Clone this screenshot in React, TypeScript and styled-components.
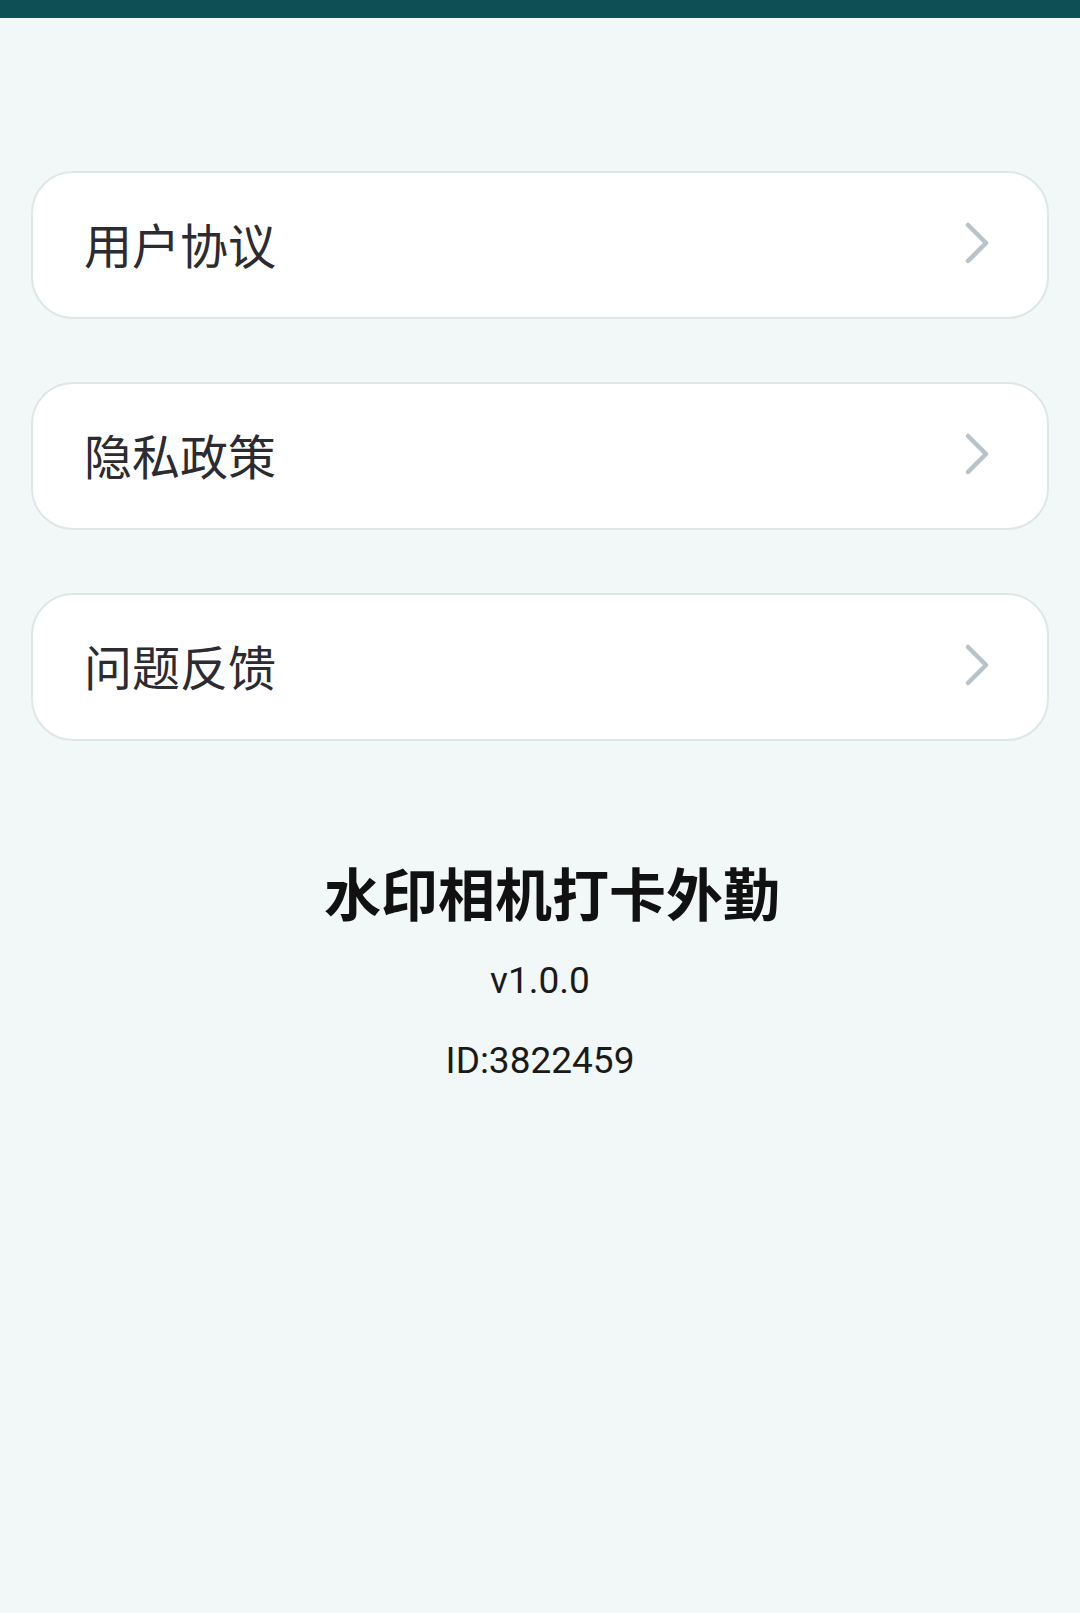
import styled, { createGlobalStyle } from 'styled-components';

const GlobalStyle = createGlobalStyle`
  html, body {
    margin: 0;
    padding: 0;
    background-color: #f2f7f7;
  }
  * {
    box-sizing: border-box;
  }
`;

const Page = styled.div`
  min-height: 1613px;
  background-color: #f2f7f7;
  font-family: Roboto, "Noto Sans CJK SC", sans-serif;
`;

const StatusBar = styled.div`
  height: 18px;
  background-color: #0d4f55;
`;

const Content = styled.main`
  padding: 153px 31px 0;
`;

const MenuList = styled.nav`
  display: flex;
  flex-direction: column;
  gap: 63px;
`;

const MenuItem = styled.a`
  display: flex;
  align-items: center;
  justify-content: space-between;
  height: 148px;
  padding: 0 57px 4px 51px;
  background-color: #ffffff;
  border: 2px solid #dfe6e7;
  border-radius: 42px;
  text-decoration: none;
  cursor: pointer;
`;

const MenuLabel = styled.span`
  font-family: "Noto Sans CJK SC", sans-serif;
  font-size: 48px;
  line-height: 1;
  color: #2b2b31;
`;

const About = styled.section`
  display: flex;
  flex-direction: column;
  align-items: center;
  margin-top: 117px;
`;

const AppName = styled.h1`
  margin: 0;
  padding-left: 24px;
  font-family: "Noto Sans CJK SC", sans-serif;
  font-size: 57px;
  font-weight: 700;
  line-height: 67px;
  color: #111111;
`;

const InfoLine = styled.p<{ $gap: number }>`
  margin: ${(p) => p.$gap}px 0 0;
  font-size: 37px;
  line-height: 42px;
  color: #1a1a1a;
`;

function Chevron() {
  return (
    <svg width="26" height="44" viewBox="0 0 26 44" fill="none">
      <polyline
        points="4,4 22,22 4,40"
        stroke="#b9c1c9"
        strokeWidth="4.5"
        strokeLinecap="round"
        strokeLinejoin="round"
      />
    </svg>
  );
}

const items = ['用户协议', '隐私政策', '问题反馈'];

export default function App() {
  return (
    <Page>
      <GlobalStyle />
      <StatusBar />
      <Content>
        <MenuList>
          {items.map((label) => (
            <MenuItem key={label}>
              <MenuLabel>{label}</MenuLabel>
              <Chevron />
            </MenuItem>
          ))}
        </MenuList>
        <About>
          <AppName>水印相机打卡外勤</AppName>
          <InfoLine $gap={35}>v1.0.0</InfoLine>
          <InfoLine $gap={38}>ID:3822459</InfoLine>
        </About>
      </Content>
    </Page>
  );
}
